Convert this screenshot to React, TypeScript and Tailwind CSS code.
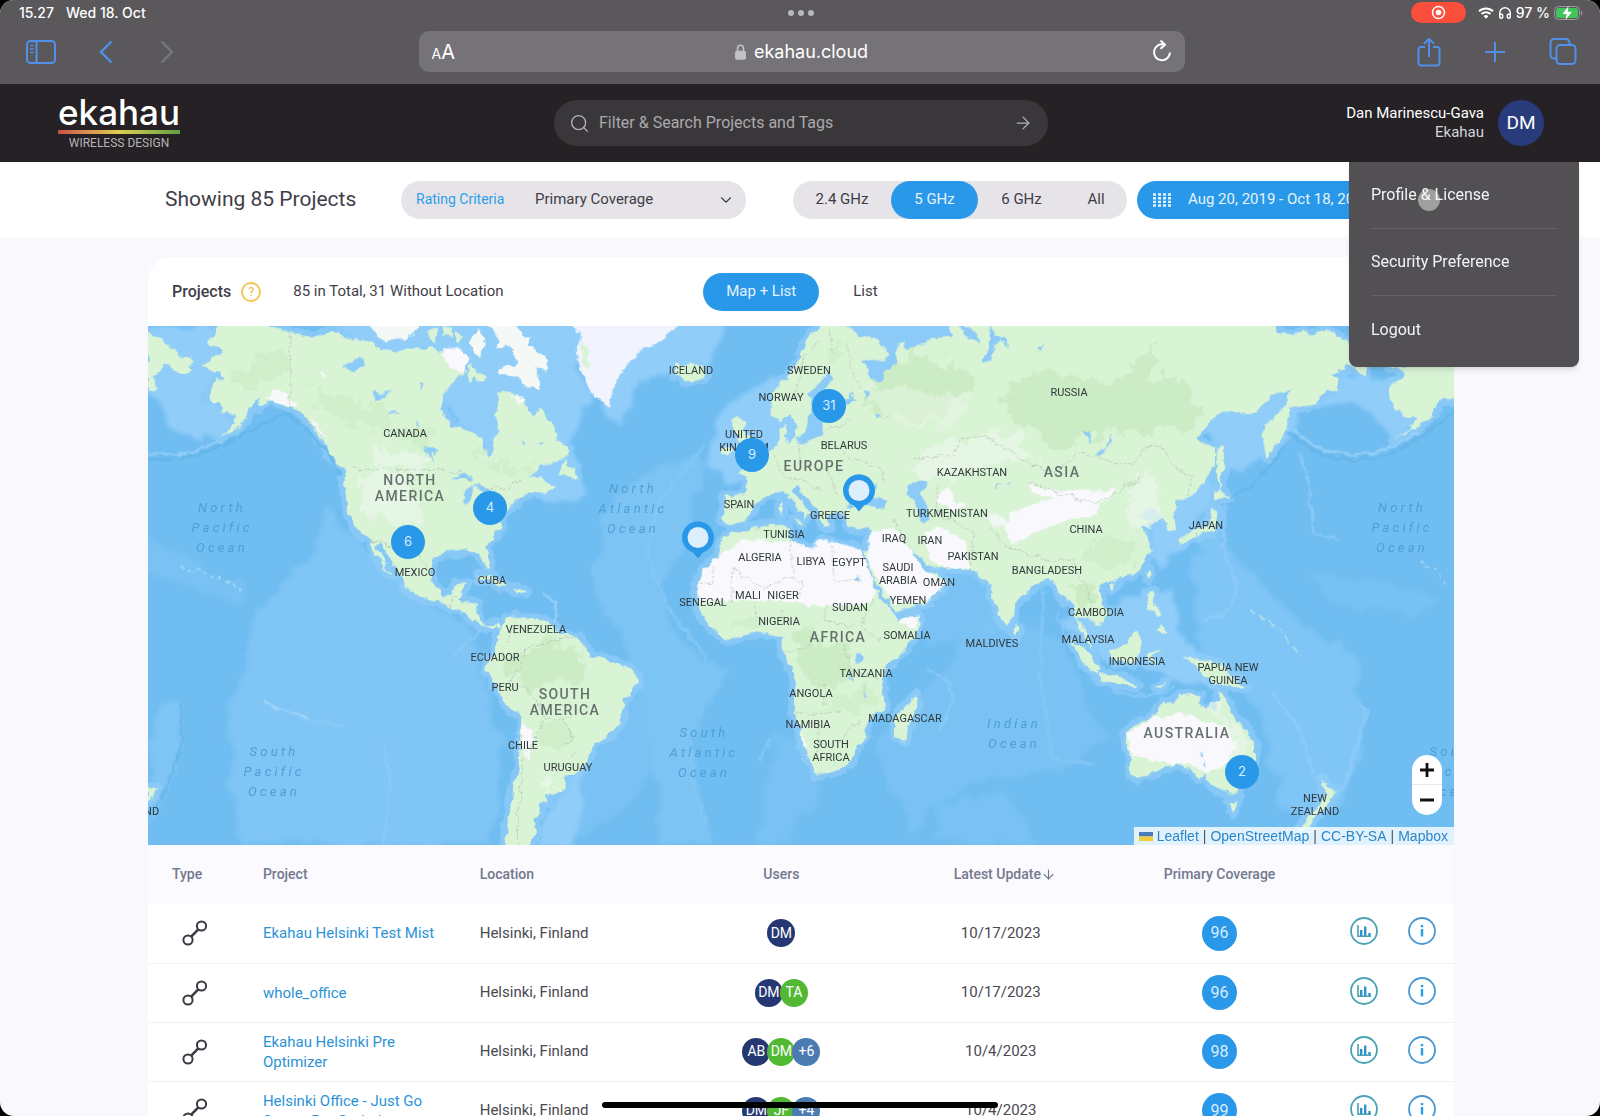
import { useState } from 'react';
import { ArrowDown, ArrowRight, ChevronDown, Headphones, Search } from 'lucide-react';

type Label = { text: string; x: number; y: number };

const COUNTRIES: Label[] = [
  { text: 'CANADA', x: 257, y: 107 },
  { text: 'ICELAND', x: 543, y: 44 },
  { text: 'SWEDEN', x: 661, y: 44 },
  { text: 'NORWAY', x: 633, y: 71 },
  { text: 'UNITED\nKINGDOM', x: 596, y: 115 },
  { text: 'BELARUS', x: 696, y: 119 },
  { text: 'RUSSIA', x: 921, y: 66 },
  { text: 'KAZAKHSTAN', x: 824, y: 146 },
  { text: 'SPAIN', x: 591, y: 178 },
  { text: 'GREECE', x: 682, y: 189 },
  { text: 'TURKMENISTAN', x: 799, y: 187 },
  { text: 'CHINA', x: 938, y: 203 },
  { text: 'JAPAN', x: 1058, y: 199 },
  { text: 'TUNISIA', x: 636, y: 208 },
  { text: 'IRAQ', x: 746, y: 212 },
  { text: 'IRAN', x: 782, y: 214 },
  { text: 'ALGERIA', x: 612, y: 231 },
  { text: 'LIBYA', x: 663, y: 235 },
  { text: 'EGYPT', x: 701, y: 236 },
  { text: 'PAKISTAN', x: 825, y: 230 },
  { text: 'SAUDI\nARABIA', x: 750, y: 248 },
  { text: 'OMAN', x: 791, y: 256 },
  { text: 'BANGLADESH', x: 899, y: 244 },
  { text: 'YEMEN', x: 760, y: 274 },
  { text: 'MEXICO', x: 267, y: 246 },
  { text: 'CUBA', x: 344, y: 254 },
  { text: 'SENEGAL', x: 555, y: 276 },
  { text: 'MALI', x: 600, y: 269 },
  { text: 'NIGER', x: 635, y: 269 },
  { text: 'SUDAN', x: 702, y: 281 },
  { text: 'CAMBODIA', x: 948, y: 286 },
  { text: 'NIGERIA', x: 631, y: 295 },
  { text: 'VENEZUELA', x: 388, y: 303 },
  { text: 'SOMALIA', x: 759, y: 309 },
  { text: 'MALDIVES', x: 844, y: 317 },
  { text: 'MALAYSIA', x: 940, y: 313 },
  { text: 'ECUADOR', x: 347, y: 331 },
  { text: 'INDONESIA', x: 989, y: 335 },
  { text: 'PERU', x: 357, y: 361 },
  { text: 'TANZANIA', x: 718, y: 347 },
  { text: 'ANGOLA', x: 663, y: 367 },
  { text: 'PAPUA NEW\nGUINEA', x: 1080, y: 348 },
  { text: 'NAMIBIA', x: 660, y: 398 },
  { text: 'MADAGASCAR', x: 757, y: 392 },
  { text: 'CHILE', x: 375, y: 419 },
  { text: 'SOUTH\nAFRICA', x: 683, y: 425 },
  { text: 'URUGUAY', x: 420, y: 441 },
  { text: 'NEW\nZEALAND', x: 1167, y: 479 },
  { text: 'NEW\nZEALAND', x: -13, y: 479 },
];

const CONTINENTS: Label[] = [
  { text: 'NORTH\nAMERICA', x: 262, y: 162 },
  { text: 'EUROPE', x: 666, y: 140 },
  { text: 'ASIA', x: 914, y: 146 },
  { text: 'AFRICA', x: 690, y: 311 },
  { text: 'SOUTH\nAMERICA', x: 417, y: 376 },
  { text: 'AUSTRALIA', x: 1039, y: 407 },
];

const OCEANS: Label[] = [
  { text: 'North\nPacific\nOcean', x: 74, y: 202 },
  { text: 'North\nAtlantic\nOcean', x: 485, y: 183 },
  { text: 'North\nPacific\nOcean', x: 1254, y: 202 },
  { text: 'South\nPacific\nOcean', x: 126, y: 446 },
  { text: 'South\nAtlantic\nOcean', x: 556, y: 427 },
  { text: 'South\nPacific\nOcean', x: 1306, y: 446 },
  { text: 'Indian\nOcean', x: 866, y: 408 },
];

const CLUSTERS = [
  { count: 31, x: 681, y: 80 },
  { count: 9, x: 604, y: 129 },
  { count: 4, x: 342, y: 182 },
  { count: 6, x: 260, y: 216 },
  { count: 2, x: 1094, y: 446 },
];

const PINS = [
  { name: 'Istanbul', x: 711, y: 164 },
  { name: 'Canary Islands', x: 550, y: 211 },
];

const ROWS = [
  { project: 'Ekahau Helsinki Test Mist', users: ['DM'], date: '10/17/2023', score: 96 },
  { project: 'whole_office', users: ['DM', 'TA'], date: '10/17/2023', score: 96 },
  { project: 'Ekahau Helsinki Pre Optimizer', users: ['AB', 'DM', '+6'], date: '10/4/2023', score: 98 },
  { project: 'Helsinki Office - Just Go Survey Pre Optimizer', users: ['DM', 'JF', '+4'], date: '10/4/2023', score: 99 },
];

const USER_COLORS = ['bg-[#263873]', 'bg-[#52b935]', 'bg-[#4b7bb0]'];
const BANDS = ['2.4 GHz', '5 GHz', '6 GHz', 'All'];

function Land() {
  return (
    <>
      {/* Americas */}
      <path d="M24 272L60 295L85 315L118 345L150 350L162 372L145 380L150 400L120 400L100 385L75 370L60 395L40 405L52 430L60 450L24 450Z" />
      <path d="M240 250L225 285L200 305L215 318L250 330L240 350L225 345L188 378L215 392L240 395L250 415L225 420L210 450L205 470L225 490L240 490L245 515L285 520L290 530L270 565L240 592L285 570L310 545L330 510L345 485L360 480L355 500L375 490L400 480L420 490L450 498L470 510L495 530L515 555L535 590L555 610L565 640L590 665L620 690L610 720L618 770L620 805L640 850L660 880L690 900L705 940L725 970L745 1000L760 1010L740 985L725 950L708 915L725 912L745 950L770 985L795 1020L800 1048L850 1075L895 1085L930 1100L960 1110L990 1135L1015 1155L1050 1165L1070 1158L1082 1170L1072 1145L1040 1158L1018 1142L1005 1120L1015 1090L975 1088L950 1080L970 1050L980 1028L950 1030L935 1060L905 1065L880 1035L870 1000L880 960L905 938L950 935L980 930L1015 935L1030 965L1045 985L1050 960L1035 925L1060 890L1085 860L1085 820L1110 800L1130 790L1150 765L1190 753L1215 762L1245 738L1215 728L1200 710L1165 710L1200 680L1250 665L1285 650L1285 625L1255 600L1240 570L1220 530L1200 500L1190 530L1165 515L1150 480L1110 455L1070 455L1075 500L1068 530L1080 570L1060 600L1062 640L1048 655L1030 630L1028 595L980 570L935 555L905 510L905 480L920 445L960 410L975 400L960 370L985 360L970 340L940 350L920 335L900 340L870 325L800 325L770 335L715 322L690 300L660 300L620 290L580 270L530 290L500 290L440 275L390 262L380 250Z" />
      <path d="M690 258L712 290L735 300L770 290L800 295L838 272L835 250L690 250ZM865 268L890 262L892 305L870 300ZM905 258L940 258L935 288L910 285ZM945 280L970 290L965 310L950 305Z" />
      <path d="M1040 250L1080 295L1075 325L1110 320L1135 360L1120 380L1080 385L1075 402L1130 410L1170 445L1200 452L1200 420L1188 385L1215 392L1228 358L1190 335L1165 320L1172 290L1150 285L1128 250Z" />
      <path d="M990 370L1010 390L1042 415L1030 425L1005 410L990 430L980 405ZM990 300L1015 265L1035 300L1020 350L995 330Z" />
      <path d="M1280 655L1262 690L1255 705L1290 710L1315 718L1305 685L1282 680Z" />
      <path d="M1015 1010L1050 1005L1100 1035L1080 1040L1050 1020L1015 1018ZM1118 1045L1150 1048L1162 1056L1130 1060Z" />
      <path d="M1080 1170L1100 1135L1130 1130L1150 1135L1215 1140L1235 1155L1270 1185L1310 1190L1340 1225L1345 1250L1375 1250L1430 1268L1460 1285L1492 1305L1490 1330L1455 1375L1445 1440L1420 1475L1360 1510L1340 1570L1300 1608L1270 1610L1278 1640L1260 1655L1225 1665L1222 1690L1195 1690L1200 1710L1180 1745L1188 1775L1165 1825L1095 1825L1100 1760L1115 1690L1120 1640L1135 1580L1140 1500L1145 1430L1100 1400L1080 1360L1055 1315L1035 1285L1045 1255L1065 1240L1075 1200Z" />
      {/* Europe and Africa */}
      <g transform="translate(1260 240)">
        <path d="M345 130L365 140L390 128L430 140L440 165L400 188L370 180L345 165Z" />
        <path d="M515 300L540 290L555 310L545 330L570 345L590 375L602 400L570 420L530 425L545 400L530 370L540 350L520 330ZM482 385L505 375L520 395L505 408L480 408Z" />
        <path d="M515 635L560 630L610 615L680 615L690 660L745 685L780 685L790 660L820 675L900 685L915 740L940 790L955 830L1000 880L1010 900L1080 890L1075 920L1050 970L980 1040L965 1080L975 1160L920 1200L920 1250L890 1275L880 1320L840 1350L770 1365L755 1330L725 1270L720 1220L700 1180L705 1070L690 1040L668 1000L668 950L640 945L600 935L500 960L440 910L415 870L410 790L430 750L475 710L485 660Z" />
        <path d="M1065 1125L1072 1160L1050 1210L1030 1262L1005 1250L1005 1190L1045 1150Z" />
        <path d="M660 545L668 548L668 582L660 580ZM700 598L730 600L725 612ZM1030 50L1065 35L1072 48L1040 66Z" />
        {/* Eurasia */}
        <path d="M780 18L740 60L720 110L700 150L660 190L635 220L628 265L640 295L665 300L690 280L700 300L710 345L690 370L675 350L680 312L660 325L658 375L630 390L600 415L560 445L535 455L565 480L560 525L490 530L495 560L485 600L515 615L550 605L575 570L590 545L635 520L670 515L700 550L735 590L725 602L748 580L725 545L695 510L710 495L735 530L770 565L790 620L810 620L800 590L830 575L860 590L865 620L900 630L925 620L930 640L925 680L910 700L920 720L940 780L975 830L1005 875L1050 865L1110 840L1160 790L1130 760L1095 755L1055 695L1070 700L1110 740L1155 745L1230 745L1260 765L1290 790L1300 840L1320 890L1340 920L1362 890L1365 850L1400 820L1440 785L1475 780L1490 800L1510 840L1530 835L1545 870L1555 910L1575 960L1598 988L1580 940L1552 895L1570 890L1590 900L1620 915L1650 880L1620 835L1615 800L1640 785L1690 775L1740 745L1775 690L1760 650L1745 620L1775 600L1735 590L1775 565L1790 575L1805 580L1825 640L1845 630L1840 590L1850 545L1890 530L1930 490L1965 430L1965 380L1935 375L1910 355L1960 290L1990 275L2090 280L2130 230L2190 210L2185 250L2140 300L2112 320L2110 370L2120 415L2150 370L2185 320L2185 265L2255 255L2300 210L2338 210L2330 170L2315 160L2360 150L2360 130L2400 160L2415 170L2420 140L2360 65L2320 40L2285 30L2260 50L2235 35L2200 45L2150 35L2145 10L780 10Z" />
      </g>
      {/* East Asia and Oceania */}
      <g transform="translate(2460 240)">
        <path d="M770 380L785 380L795 450L780 480L778 510L770 460ZM765 520L780 505L805 530L765 545ZM762 560L775 580L762 630L700 650L660 675L655 655L700 635L742 620L752 590Z" />
        <path d="M570 748L575 760L565 778L560 765ZM448 795L465 790L455 812ZM560 820L580 815L580 860L608 880L600 890L565 868ZM590 930L610 910L620 940L605 945ZM160 912L178 925L172 945L162 938Z" />
        <path d="M330 955L380 990L420 1050L412 1068L370 1030ZM418 1062L490 1072L532 1095L530 1102L420 1078ZM445 990L480 985L525 935L545 950L540 1000L520 1030L460 1025ZM560 1000L605 992L580 1010L590 1040L565 1030ZM590 1100L620 1085L600 1105Z" />
        <path d="M670 1010L700 1015L740 1020L790 1040L830 1080L858 1105L820 1100L760 1090L720 1050Z" />
        <path d="M495 1240L530 1210L580 1190L610 1145L640 1150L660 1125L720 1125L710 1150L765 1180L780 1115L805 1150L820 1190L860 1230L885 1280L885 1320L850 1370L830 1420L770 1410L740 1380L735 1360L715 1375L690 1345L650 1330L600 1350L530 1375L510 1365L510 1310Z" />
        <path d="M805 1448L832 1448L820 1482ZM1085 1375L1105 1405L1130 1410L1108 1445L1060 1495L1045 1530L1015 1530L1070 1465L1095 1435Z" />
        <path d="M1285 140L1330 150L1325 180L1295 190L1285 230L1310 270L1340 290L1370 290L1350 330L1300 362L1370 325L1400 300L1430 260L1445 235L1490 240L1490 130Z" />
      </g>
      <path d="M24 1645L48 1645L40 1665L24 1685Z" />
    </>
  );
}

function WorldMap() {
  return (
    <svg
      viewBox="24 258 3918 1557"
      preserveAspectRatio="xMidYMid slice"
      className="absolute inset-0 h-full w-full"
      role="img"
      aria-label="World map"
    >
      <defs>
        <filter id="coast" x="-2%" y="-2%" width="104%" height="104%">
          <feTurbulence type="fractalNoise" baseFrequency="0.035" numOctaves="3" seed="4" result="n" />
          <feDisplacementMap in="SourceGraphic" in2="n" scale="24" xChannelSelector="R" yChannelSelector="G" />
        </filter>
        <filter id="relief" x="-2%" y="-2%" width="104%" height="104%">
          <feTurbulence type="fractalNoise" baseFrequency="0.02" numOctaves="4" seed="7" result="n" />
          <feDisplacementMap in="SourceGraphic" in2="n" scale="90" xChannelSelector="R" yChannelSelector="G" />
          <feGaussianBlur stdDeviation="2" />
        </filter>
        <filter id="soft" x="-10%" y="-10%" width="120%" height="120%">
          <feTurbulence type="fractalNoise" baseFrequency="0.012" numOctaves="3" seed="9" result="n" />
          <feDisplacementMap in="SourceGraphic" in2="n" scale="70" xChannelSelector="R" yChannelSelector="G" />
          <feGaussianBlur stdDeviation="7" />
        </filter>
      </defs>

      <rect x="24" y="258" width="3918" height="1557" fill="#70bdf1" />

      {/* sea floor */}
      <g filter="url(#soft)" fill="#7fc5f5">
        <path d="M560 800L700 950L1000 1180L1030 1330L1090 1480L1060 1815L300 1815L260 1500L350 1100L520 960Z" />
        <path d="M24 900L120 950L300 1030L330 1090L200 1060L24 1000Z" opacity=".6" />
        <path d="M1400 820L1500 700L1700 640L1640 900L1560 1060L1640 1220L1760 1300L1660 1500L1700 1815L1560 1815L1540 1500L1440 1200L1360 1000Z" opacity=".8" />
        <path d="M1500 1320L1600 1500L1500 1650L1300 1815L1240 1815L1300 1600Z" opacity=".7" />
        <path d="M1900 1500L2020 1460L2050 1640L1960 1815L1860 1815Z" opacity=".6" />
        <path d="M2200 1500L2400 1300L2560 1100L2760 1200L2900 1500L2760 1600L2500 1620L2300 1780Z" opacity=".7" />
        <path d="M3150 960L3280 940L3480 1150L3640 1240L3680 1450L3600 1700L3420 1700L3360 1420L3180 1260Z" />
        <path d="M3180 700L3240 860L3300 1000L3240 1090L3180 900Z" />
        <path d="M3500 1000L3700 1010L3900 1080L3800 1130L3560 1080Z" opacity=".5" />
        <path d="M2180 1030L2420 950L2600 1000L2560 1180L2380 1220Z" opacity=".7" />
        <path d="M2400 1700L2600 1640L2700 1815L2380 1815Z" opacity=".6" />
        <path d="M60 1380L130 1400L110 1600L24 1760L24 1500Z" />
      </g>

      {/* continental shelves */}
      <g filter="url(#soft)" fill="#91cdf9">
        <path d="M24 258H250L200 480L300 560L170 610L90 540L24 470Z" />
        <path d="M560 240L1300 240L1340 480L1280 620L1340 760L1240 800L1100 700L860 420Z" />
        <path d="M1280 240H1760L1700 380L1500 420L1440 560L1380 500Z" />
        <path d="M1900 400L1740 520L1700 640L1760 720L1860 720L2080 600Z" />
        <path d="M2040 240H2580V420L2200 420Z" />
        <path d="M3180 540L3260 700L3420 640L3480 500L3380 440Z" />
        <path d="M3520 500L3600 400L3780 420L3860 520L3760 600L3640 480Z" />
        <path d="M3000 800L3060 1000L3140 900L3220 760L3120 700Z" />
        <path d="M2760 1140L2900 1260L3060 1300L3240 1350L3120 1180L3100 1060L2940 1080Z" />
        <path d="M1260 1660L1340 1560L1300 1815L1180 1815Z" />
      </g>
      <g filter="url(#coast)" stroke="#91cdf9" strokeWidth="34" strokeLinejoin="round" fill="#91cdf9" opacity=".75">
        <Land />
      </g>

      {/* trenches, ridges and island arcs */}
      <g filter="url(#coast)" fill="none" strokeLinecap="round" opacity=".8">
        <path d="M24 655Q140 670 250 615T430 520Q520 560 600 700" stroke="#63b4e8" strokeWidth="8" />
        <path d="M24 640Q140 655 240 605" stroke="#9bd3fa" strokeWidth="7" />
        <path d="M3450 580Q3540 660 3640 660T3830 600L3942 520" stroke="#63b4e8" strokeWidth="8" />
        <path d="M3460 570Q3540 645 3640 643T3830 580" stroke="#9bd3fa" strokeWidth="8" />
        <path d="M3430 620Q3360 740 3270 770" stroke="#63b4e8" strokeWidth="8" />
        <path d="M3255 800L3250 920L3290 1040L3270 1110L3200 1140" stroke="#8ecbf8" strokeWidth="12" />
        <path d="M3480 640L3510 760L3520 880L3600 900" stroke="#8ecbf8" strokeWidth="7" />
        <path d="M2750 1120Q2780 1240 2880 1320T3100 1345" stroke="#8ecbf8" strokeWidth="8" />
        <path d="M3660 1390L3680 1420L3620 1620L3560 1700" stroke="#8ecbf8" strokeWidth="14" />
        <path d="M3400 1360L3480 1470L3520 1600" stroke="#8ecbf8" strokeWidth="12" />
        <path d="M2710 1030L2700 1320L2740 1560L2860 1570" stroke="#84c8f6" strokeWidth="10" />
        <path d="M1690 620L1560 780L1520 940L1580 1100L1700 1260" stroke="#84c8f6" strokeWidth="12" />
        <path d="M1650 1500L1660 1640L1700 1760M1860 1560L1890 1500" stroke="#84c8f6" strokeWidth="10" />
        <path d="M2360 1290Q2430 1310 2440 1380L2400 1470" stroke="#8ecbf8" strokeWidth="9" />
        <path d="M730 1500L750 1620L730 1815M480 1430L620 1460M940 1250L1050 1140" stroke="#8bcaf7" strokeWidth="10" />
        <path d="M120 1390Q140 1500 90 1620L40 1720" stroke="#63b4e8" strokeWidth="6" />
        <path d="M1210 1060L1250 1090L1240 1140" stroke="#a3d7fb" strokeWidth="8" />
        <path d="M120 980L200 1000L260 1025L305 1048M3840 970L3890 990L3922 1045" stroke="#b9e1f8" strokeWidth="5" strokeDasharray="8 16" />
        <path d="M370 1385L420 1410L500 1430" stroke="#a8d9fa" strokeWidth="6" />
        <path d="M3330 1110L3420 1170L3480 1250" stroke="#bfe5ee" strokeWidth="5" strokeDasharray="20 14" />
      </g>

      <g filter="url(#coast)">
        <g fill="#d9f3d5">
          <Land />
        </g>
        {/* forests */}
        <g fill="#ccecc5" filter="url(#relief)">
          <path d="M290 400L340 340L440 330L445 400L380 430L300 440Z" opacity=".8" />
          <path d="M480 400L560 480L700 490L760 560L900 570L860 620L680 560L560 520Z" opacity=".7" />
          <path d="M980 590L1040 670L1150 660L1170 680L1130 700L1080 700L1000 640Z" opacity=".7" />
          <path d="M1150 1225L1240 1195L1310 1225L1325 1262L1340 1310L1280 1320L1160 1345L1110 1310L1080 1265Z" />
          <path d="M1190 1470L1230 1440L1270 1440L1300 1500L1260 1540L1200 1520Z" opacity=".8" />
          <g transform="translate(1260 240)">
            <path d="M940 190L1000 130L1080 100L1180 130L1240 180L1220 220L1170 240L1150 290L1060 300L980 290L910 240Z" />
            <path d="M1380 170L1460 150L1600 190L1720 170L1760 90L1795 55L1770 170L1900 190L1925 300L1890 330L1760 330L1630 340L1500 380L1380 330L1330 240Z" />
            <path d="M1560 680L1630 640L1740 690L1700 730L1640 750L1560 730Z" opacity=".8" />
            <path d="M700 930L740 920L760 970L860 970L880 1070L830 1100L740 1080L705 1010Z" />
            <path d="M520 890L560 890L640 910L520 930ZM800 1110L900 1120L940 1100L940 1150L880 1180L800 1150Z" opacity=".7" />
            <path d="M1540 800L1600 790L1600 840L1560 850Z" />
            <path d="M820 60L850 50L840 110L810 110Z" opacity=".7" />
          </g>
        </g>
        {/* steppe */}
        <g fill="#e8f6e8" filter="url(#relief)">
          <path d="M710 620L840 630L900 680L720 685ZM660 700L800 700L850 860L700 830L660 780Z" opacity=".8" />
          <path d="M1215 1600L1250 1612L1258 1640L1220 1655L1200 1630Z" />
          <path d="M2300 660L2440 600L2620 580L2700 650L2560 680L2360 720Z" opacity=".8" />
          <path d="M2960 820L3010 680L3050 720L3060 830L3000 880Z" opacity=".8" />
          <path d="M3200 1400L3230 1380L3310 1500L3310 1600L3260 1620L3240 1440Z" opacity=".7" />
          <path d="M2150 450L2300 440L2500 480L2440 560L2300 560Z" opacity=".5" />
        </g>
        {/* deserts and ice */}
        <g fill="#f8f8fd">
          <path d="M400 445L430 455L470 500L440 495L380 478ZM540 390L560 405L562 420L545 408ZM500 515L560 600L540 590Z" opacity=".9" />
          <path d="M905 330L960 320L985 360L970 400L930 385ZM1110 460L1150 480L1140 500Z" />
          <path d="M690 250L835 250L838 272L800 295L735 300L712 290ZM1040 250L1080 295L1075 325L1110 320L1135 360L1120 380L1080 385L1075 402L1130 410L1170 445L1200 452L1200 420L1188 385L1215 392L1228 358L1190 335L1165 320L1172 290L1150 285L1128 250ZM990 300L1015 265L1035 300L1020 350L995 330Z" opacity=".85" />
          <path d="M1145 1440L1180 1480L1165 1560L1145 1540Z" />
          <g transform="translate(1260 240)">
            <path d="M30 10L60 45L50 100L65 160L90 215L150 262L165 195L185 145L215 125L245 90L290 70L345 30L370 10Z" fill="#f1f4fd" />
            <path d="M475 710L540 665L690 660L745 685L790 660L900 685L940 790L945 840L900 855L780 860L650 842L520 840L415 845L410 790L430 750Z" />
            <path d="M930 640L1000 622L1050 690L1100 755L1160 790L1110 840L1050 850L1005 850L960 790L915 710Z" />
            <path d="M1090 640L1130 620L1210 660L1230 745L1155 745L1110 720Z" />
            <path d="M1330 625L1350 590L1410 555L1500 530L1620 540L1610 585L1540 600L1440 630L1360 675Z" />
            <path d="M1410 495L1500 515L1670 505L1630 550L1510 540L1420 520ZM1130 520L1170 500L1180 540L1220 560L1180 570L1130 545Z" />
            <path d="M1010 898L1080 890L1060 925ZM725 1230L745 1290L728 1270Z" />
            <path d="M1280 590L1320 580L1350 620L1300 620Z" opacity=".7" />
          </g>
          <path d="M2960 1480L3040 1435L3130 1420L3180 1440L3260 1460L3290 1520L3250 1580L3200 1600L3150 1570L3080 1570L2980 1550Z" />
        </g>
        <path d="M1320 310L1345 320L1345 390L1330 380Z" fill="#d9f3d5" />

        {/* inland water */}
        <g fill="#8ccaf7">
          <path d="M605 380L660 350L680 370L640 395ZM695 455L725 460L760 445L720 475L700 485ZM745 520L785 515L750 528ZM845 620L865 640L880 670L870 630L885 650L890 625ZM832 432L845 430L840 448ZM828 545L836 540L832 562Z" />
          <path d="M930 720L970 695L1005 720L975 715ZM975 750L1000 735L990 790L975 795ZM1000 735L1045 740L1060 760L1030 760Z" />
          <path d="M1150 600L1160 620L1150 615ZM1195 605L1210 600L1205 612Z" />
          <g transform="translate(1260 240)">
            <path d="M850 10L890 45L950 60L982 95L975 125L905 115L935 180L965 185L970 160L1010 130L1015 70L1035 60L1035 95L1080 75L1120 55L1180 50L1165 10Z" />
            <path d="M1190 10L1250 40L1255 72L1225 55ZM1288 10L1305 50L1335 50L1345 85L1325 60L1310 70L1295 115L1270 125L1260 118L1290 90Z" />
            <path d="M745 225L775 190L805 158L822 175L797 205L812 238L880 234L870 250L805 265L787 310L790 345L760 352L735 368L705 358L735 330L748 295L757 260Z" />
            <path d="M870 520L925 525L985 545L975 565L915 555L860 565ZM940 495L955 490L945 515Z" />
            <path d="M1045 500L1100 480L1100 505L1080 520L1105 560L1108 600L1080 605L1070 560L1042 522Z" />
            <path d="M875 210L890 240L870 240ZM915 205L930 215L920 245ZM945 280L960 290L950 295ZM1435 80L1450 70L1440 95Z" />
            <path d="M1655 340L1655 370L1612 412L1600 405L1640 380ZM1300 505L1355 485L1350 490L1310 497ZM1570 330L1595 335L1590 375Z" />
            <path d="M888 1005L905 998L915 1010L900 1028L888 1020ZM868 1050L880 1080L872 1085ZM912 1095L920 1130L914 1140ZM880 780L905 765L890 782Z" />
          </g>
          <path d="M3180 1530L3192 1545L3184 1550ZM3188 1560L3196 1580L3188 1578Z" />
        </g>

        {/* borders */}
        <g fill="none" stroke="#9fb0a0" strokeWidth="3" strokeDasharray="9 5" opacity=".6">
          <path d="M450 258V498L515 550L550 600M640 688H905L975 710L1040 745L1100 745L1150 715M690 900L755 918L810 920L860 980" />
          <path d="M930 1100L940 1070L970 1090M1090 1220L1120 1160M1150 1225L1250 1200L1330 1190M1150 1225V1280L1110 1320L1160 1350L1200 1400L1210 1440L1190 1480L1150 1560L1130 1815M1210 1440H1270L1300 1500L1260 1520M1310 1530L1280 1560" />
          <g transform="translate(1260 240)">
            <path d="M780 60L730 110L720 170L700 240M800 30L820 100M860 60L870 140L900 200M800 330L880 300M720 370V430L800 450L830 520M830 380L880 420L960 440L970 480M640 410L670 470L720 480L780 510M1060 420L1180 400L1200 360L1260 345L1330 380L1400 430" />
            <path d="M515 740L610 810L690 770L730 790M515 740V850M690 660L700 760M820 675V780H905M460 740V790H415M730 790L710 850M580 850L600 900M660 870L700 920M800 860L790 900L880 920M940 840L900 920L960 960M670 1000L740 980L760 920M705 1180H790L840 1170M795 1090V1160M775 1210V1300M830 1270L900 1200M850 970L870 1040L960 1080M560 560L490 570M1000 600L1050 690M1160 590L1240 640L1230 745M1130 500V580L1180 600" />
            <path d="M1400 430L1480 460L1560 400L1640 420L1720 440L1760 380L1810 380L1840 440L1900 470L1880 530M1410 490L1500 520L1610 550L1740 480M1290 620L1340 680L1460 720L1540 720L1560 780M1570 780L1600 860M1740 470L1680 510" />
          </g>
        </g>
      </g>
    </svg>
  );
}

function ProjectMap() {
  return (
    <div className="relative h-[519px] overflow-hidden">
      <WorldMap />
      {OCEANS.map((l, i) => (
        <span
          key={i}
          className="absolute -translate-x-1/2 -translate-y-1/2 whitespace-pre text-center text-[13px] leading-5 tracking-[0.25em] text-[#4d9fd6] italic"
          style={{ left: l.x, top: l.y }}
        >
          {l.text}
        </span>
      ))}
      {COUNTRIES.map((l, i) => (
        <span
          key={i}
          className="absolute -translate-x-1/2 -translate-y-1/2 whitespace-pre text-center text-[11px] leading-[13px] text-[#30383b]"
          style={{ left: l.x, top: l.y }}
        >
          {l.text}
        </span>
      ))}
      {CONTINENTS.map((l) => (
        <span
          key={l.text}
          className="absolute -translate-x-1/2 -translate-y-1/2 whitespace-pre text-center text-[14px] leading-4 font-medium tracking-widest text-[#66706c]"
          style={{ left: l.x, top: l.y }}
        >
          {l.text}
        </span>
      ))}
      {PINS.map((p) => (
        <button
          key={p.name}
          aria-label={p.name}
          className="absolute -translate-x-1/2"
          style={{ left: p.x, top: p.y - 16 }}
        >
          <svg width="34" height="38" viewBox="0 0 34 38">
            <path d="M17 37.5l-5-6A16 16 0 1 1 22 31.500z" fill="#2a98e9" />
            <circle cx="17" cy="16.500" r="10.500" fill="#ddeefc" />
          </svg>
        </button>
      ))}
      {CLUSTERS.map((c) => (
        <button
          key={c.count}
          className="absolute size-[34px] -translate-x-1/2 -translate-y-1/2 rounded-full bg-[#2a98e9] font-[Inter,sans-serif] text-[13px] text-[#d9eefd]"
          style={{ left: c.x, top: c.y }}
        >
          {c.count}
        </button>
      ))}
      <div className="absolute right-3 bottom-[30px] flex w-[30px] flex-col divide-y divide-gray-200 overflow-hidden rounded-full bg-white">
        <button aria-label="Zoom in" className="flex h-[30px] items-center justify-center">
          <svg width="14" height="14" viewBox="0 0 14 14" stroke="#111" strokeWidth="2.800">
            <path d="M0 7h14M7 0v14" />
          </svg>
        </button>
        <button aria-label="Zoom out" className="flex h-[30px] items-center justify-center">
          <svg width="14" height="14" viewBox="0 0 14 14" stroke="#111" strokeWidth="2.800">
            <path d="M0 7h14" />
          </svg>
        </button>
      </div>
      <div className="absolute right-0 bottom-0 flex h-[18px] items-center gap-1 bg-white/80 pr-[6px] pl-[5px] font-['Liberation_Sans',sans-serif] text-[14px] text-[#2a86c8]">
        <svg width="14" height="9" viewBox="0 0 14 9" aria-hidden="true">
          <path fill="#4a7bbd" d="M0 0h14v4.500H0z" />
          <path fill="#f2cf3a" d="M0 4.500h14V9H0z" />
        </svg>
        <a href="#leaflet">Leaflet</a>
        <span className="text-gray-600">|</span>
        <a href="#osm">OpenStreetMap</a>
        <span className="text-gray-600">|</span>
        <a href="#license">CC-BY-SA</a>
        <span className="text-gray-600">|</span>
        <a href="#mapbox">Mapbox</a>
      </div>
    </div>
  );
}

function BrowserChrome() {
  return (
    <div className="h-[84px] shrink-0 bg-[#5a585b] font-[Inter,sans-serif] text-white">
      <div className="grid h-[25px] grid-cols-[1fr_auto_1fr] items-center pr-[17px] pl-[19px] text-[14px] font-medium">
        <div className="flex gap-3">
          <span>15.27</span>
          <span>Wed 18. Oct</span>
        </div>
        <div className="flex gap-1">
          <i className="size-[6px] rounded-full bg-[#b9b8ba]" />
          <i className="size-[6px] rounded-full bg-[#b9b8ba]" />
          <i className="size-[6px] rounded-full bg-[#b9b8ba]" />
        </div>
        <div className="flex items-center justify-end gap-1">
          <span className="mr-2 flex h-[21px] w-[55px] items-center justify-center rounded-full bg-[#fb4f3c]">
            <svg width="15" height="15" viewBox="0 0 15 15" fill="none" stroke="#fff" strokeWidth="1.500">
              <circle cx="7.500" cy="7.500" r="6" />
              <circle cx="7.500" cy="7.500" r="2.800" fill="#fff" stroke="none" />
            </svg>
          </span>
          <svg width="16" height="12" viewBox="0 0 16 12" fill="none" stroke="#fff" strokeWidth="2">
            <path d="M1 4.300a10 10 0 0 1 14 0M3.500 7a6.400 6.400 0 0 1 9 0" />
            <path d="M8 11.800L5.600 9.300a3.400 3.400 0 0 1 4.800 0z" fill="#fff" stroke="none" />
          </svg>
          <Headphones size={14} strokeWidth={2.5} />
          <span>97 %</span>
          <svg width="29" height="14" viewBox="0 0 29 14" aria-label="Charging">
            <rect x=".5" y=".5" width="25" height="13" rx="4" fill="none" stroke="#9b9a9c" />
            <rect x="2" y="2" width="22" height="10" rx="2.500" fill="#41c45c" />
            <path d="M27 4.800q1.500.8 1.500 2.200T27 9.200z" fill="#9b9a9c" />
            <path d="M14.500 0L8.500 8h4l-1 6 6.500-8.300h-4.200z" fill="#fff" />
          </svg>
        </div>
      </div>

      <div className="grid h-[53px] grid-cols-[1fr_766px_1fr] items-center pr-[23px] pl-[26px] text-[#5090ea]">
        <div className="flex items-center">
          <button aria-label="Show sidebar">
            <svg width="30" height="24" viewBox="0 0 30 24" fill="none" stroke="currentColor" strokeWidth="2">
              <rect x="1" y="1" width="28" height="22" rx="3.500" />
              <path d="M10.500 1v22" />
              <path d="M4 5.500h3.500M4 9h3.500M4 12.500h3.500" strokeWidth="1.500" />
            </svg>
          </button>
          <button aria-label="Back" className="ml-[43px]">
            <svg width="14" height="24" viewBox="0 0 14 24" fill="none" stroke="currentColor" strokeWidth="2.400">
              <path d="M12.500 1.500L2 12l10.500 10.500" />
            </svg>
          </button>
          <button aria-label="Forward" className="ml-[47px] text-[#7b797c]">
            <svg width="14" height="24" viewBox="0 0 14 24" fill="none" stroke="currentColor" strokeWidth="2.200">
              <path d="M1.500 1.500L12 12L1.500 22.500" />
            </svg>
          </button>
        </div>
        <div className="grid h-[41px] grid-cols-[1fr_auto_1fr] items-center rounded-[10px] bg-[#757377] px-[13px] text-white">
          <button className="justify-self-start" aria-label="Page settings">
            <span className="text-[14px]">A</span>
            <span className="text-[20px]">A</span>
          </button>
          <div className="flex items-center gap-2">
            <svg width="11" height="16" viewBox="0 0 11 16" aria-hidden="true">
              <path d="M2.500 7V4.200a3 3 0 0 1 6 0V7" fill="none" stroke="#c2c1c3" strokeWidth="1.600" />
              <rect y="6.800" width="11" height="9" rx="2" fill="#c2c1c3" />
            </svg>
            <span className="text-[18px]">ekahau.cloud</span>
          </div>
          <button className="justify-self-end" aria-label="Reload">
            <svg width="20" height="23" viewBox="0 0 20 23" fill="none" stroke="#fff" strokeWidth="2">
              <path d="M12 4.500A8 8 0 1 0 18 12.500" />
              <path d="M8.500.5l4.500 4.200-4.500 4" />
            </svg>
          </button>
        </div>
        <div className="flex items-center justify-end">
          <button aria-label="Share">
            <svg width="24" height="30" viewBox="0 0 24 30" fill="none" stroke="currentColor" strokeWidth="2">
              <path d="M8 10H4a2.500 2.500 0 0 0-2.500 2.500V26A2.500 2.500 0 0 0 4 28.500h16a2.500 2.500 0 0 0 2.500-2.500V12.500A2.500 2.500 0 0 0 20 10h-4" />
              <path d="M12 20V2M7 6.800L12 1.800l5 5" />
            </svg>
          </button>
          <button aria-label="New tab" className="ml-[44px]">
            <svg width="20" height="20" viewBox="0 0 20 20" stroke="currentColor" strokeWidth="2">
              <path d="M0 10h20M10 0v20" />
            </svg>
          </button>
          <button aria-label="Show tabs" className="ml-[44px]">
            <svg width="28" height="27" viewBox="0 0 28 27" fill="none" stroke="currentColor" strokeWidth="2">
              <rect x="7.500" y="7" width="19" height="19" rx="3.500" />
              <path d="M7.500 20.500H5A3.500 3.500 0 0 1 1.500 17V4.500A3.500 3.500 0 0 1 5 1h12a3.500 3.500 0 0 1 3.500 3.500V7" />
            </svg>
          </button>
        </div>
      </div>
    </div>
  );
}

function Header() {
  return (
    <header className="relative z-10 grid h-[78px] shrink-0 grid-cols-[1fr_494px_1fr] items-center bg-[#252124] pr-14 pl-[58px]">
      <a href="#home" className="flex w-[122px] flex-col items-center pb-[2px] text-white">
        <span className="font-[Inter,sans-serif] text-[35px] leading-[35px] font-medium">ekahau</span>
        <span className="h-1 w-full bg-linear-to-r from-[#c9504a] via-[#ddcf50] to-[#5f9e46]" />
        <span className="mt-[3px] text-[12px] leading-3 text-[#b5b3b6]">WIRELESS DESIGN</span>
      </a>
      <form className="flex h-[46px] items-center rounded-full bg-[#3a373a] px-[15px] text-[#b3b1b4]">
        <Search size={21} strokeWidth={1.5} />
        <input
          type="search"
          aria-label="Filter and search"
          placeholder="Filter & Search Projects and Tags"
          className="ml-[9px] min-w-0 flex-1 bg-transparent text-[16px] outline-none placeholder:text-[#aba9ac]"
        />
        <button aria-label="Submit search">
          <ArrowRight size={20} strokeWidth={1.5} />
        </button>
      </form>
      <div className="flex items-center justify-end gap-[14px]">
        <div className="text-right text-[15px] leading-[19px] text-white">
          <div>Dan Marinescu-Gava</div>
          <div className="text-gray-300">Ekahau</div>
        </div>
        <button className="size-[46px] rounded-full bg-[#283c7c] text-[19px] text-white">DM</button>
      </div>

      <nav className="absolute top-full right-[21px] w-[230px] rounded-b-lg bg-[#525053] px-[22px] pb-1 text-[16px] text-gray-100 shadow-md">
        <div className="divide-y divide-[#646266]">
          <a href="#profile" className="flex h-[67px] items-center">Profile &amp; License</a>
          <a href="#security" className="flex h-[67px] items-center">Security Preference</a>
          <a href="#logout" className="flex h-[67px] items-center">Logout</a>
        </div>
        <span className="absolute top-[27px] left-[69px] size-[22px] rounded-full bg-white/45" />
      </nav>
    </header>
  );
}

function Toolbar() {
  const [band, setBand] = useState('5 GHz');
  return (
    <div className="flex h-[75px] shrink-0 items-center bg-white pl-[165px] text-[15px] text-[#3f3e48]">
      <h1 className="w-[236px] text-[21px]">Showing 85 Projects</h1>
      <div className="relative flex h-[38px] w-[345px] items-center rounded-full bg-[#e6e4e9] pl-[15px]">
        <label htmlFor="criteria" className="w-[115px] text-[14px] text-[#2ba0ea]">Rating Criteria</label>
        <select id="criteria" className="h-full flex-1 appearance-none bg-transparent px-1 outline-none">
          <option>Primary Coverage</option>
        </select>
        <ChevronDown size={18} strokeWidth={1.5} className="pointer-events-none absolute right-[11px]" />
      </div>
      <div className="ml-[47px] flex h-[38px] rounded-full bg-[#e6e4e9]">
        {BANDS.map((b) => (
          <button
            key={b}
            aria-pressed={b === band}
            onClick={() => setBand(b)}
            className={b === band ? 'w-[87px] rounded-full bg-[#2a98e9] text-[#e4f3fe]' : b === 'All' ? 'w-[62px]' : b === '6 GHz' ? 'w-[87px]' : 'w-[98px]'}
          >
            {b}
          </button>
        ))}
      </div>
      <button className="ml-[10px] flex h-[38px] items-center gap-[17px] whitespace-nowrap rounded-full bg-[#2a98e9] px-4 text-[#e4f3fe]">
        <svg width="18" height="14" viewBox="0 0 18 14" stroke="currentColor" strokeWidth="3" strokeDasharray="3 2" aria-hidden="true">
          <path d="M0 1.500h18M0 5.200h18M0 8.900h18M0 12.500h18" strokeWidth="2.400" />
        </svg>
        Aug 20, 2019 - Oct 18, 2023
      </button>
    </div>
  );
}

function ProjectTable() {
  return (
    <table className="w-full table-fixed bg-white text-[15px] text-[#4a4952]">
      <colgroup>
        <col className="w-[8.800%]" />
        <col className="w-[16.600%]" />
        <col className="w-[16.600%]" />
        <col className="w-[13%]" />
        <col className="w-[20.600%]" />
        <col className="w-[12.900%]" />
        <col />
      </colgroup>
      <thead className="bg-[#fafaff] text-[14px] text-[#74798c]">
        <tr className="h-[59px] text-left">
          <th className="pl-6 font-medium">Type</th>
          <th className="font-medium">Project</th>
          <th className="font-medium">Location</th>
          <th className="text-center font-medium">Users</th>
          <th className="pl-2 font-medium">
            <button className="mx-auto flex items-center">
              Latest Update
              <ArrowDown size={15} strokeWidth={1.8} />
            </button>
          </th>
          <th className="text-center font-medium">Primary Coverage</th>
          <th>
            <span className="sr-only">Actions</span>
          </th>
        </tr>
      </thead>
      <tbody>
        {ROWS.map((r) => (
          <tr key={r.project} className="h-[59px] border-b border-[#f1f1f5]">
            <td className="pl-[34px]">
              <svg width="26" height="26" viewBox="0 0 26 26" fill="none" stroke="#3c3b45" strokeWidth="2" aria-hidden="true">
                <circle cx="6" cy="20" r="4.600" />
                <circle cx="19.500" cy="6" r="4.600" />
                <path d="M9.200 16.700L16.300 9.300" strokeWidth="2.600" />
              </svg>
            </td>
            <td className="pr-8">
              <a href="#project" className="line-clamp-2 leading-5 text-[#2b93d6]">{r.project}</a>
            </td>
            <td>Helsinki, Finland</td>
            <td>
              <div className="flex justify-center -space-x-[3px]">
                {r.users.map((u, i) => (
                  <span
                    key={u}
                    className={`flex size-7 items-center justify-center rounded-full text-[14px] text-white ${USER_COLORS[i]}`}
                  >
                    {u}
                  </span>
                ))}
              </div>
            </td>
            <td className="text-center">{r.date}</td>
            <td>
              <span className="mx-auto flex size-[35px] items-center justify-center rounded-full bg-[#2a98e9] text-[16px] text-[#d9eefd]">
                {r.score}
              </span>
            </td>
            <td>
              <div className="flex justify-end gap-[30px] pr-[18px] pb-1">
                <button aria-label="Report">
                  <svg width="28" height="28" viewBox="0 0 28 28" fill="none" stroke="#4aa3b5" strokeWidth="1.800">
                    <circle cx="14" cy="14" r="13" />
                    <path d="M8 8v11.200H21" strokeWidth="1.600" />
                    <path d="M11.200 19v-6M15.200 19V9.500M19.500 19v-3" stroke="#2f93c9" strokeWidth="2.400" />
                  </svg>
                </button>
                <button aria-label="Details">
                  <svg width="28" height="28" viewBox="0 0 28 28" fill="none" stroke="#4a98d2" strokeWidth="1.800">
                    <circle cx="14" cy="14" r="13" />
                    <path d="M14 12v7.500M14 8v2.200" stroke="#2b9fe6" strokeWidth="2.400" />
                  </svg>
                </button>
              </div>
            </td>
          </tr>
        ))}
      </tbody>
    </table>
  );
}

export default function App() {
  return (
    <div className="h-screen bg-black font-[Roboto,sans-serif]">
      <div className="relative flex h-full flex-col overflow-hidden rounded-[14px] bg-[#f8f8fd]">
        <BrowserChrome />
        <Header />
        <Toolbar />
        <main className="min-h-0 flex-1 overflow-hidden pt-5 pr-4 pl-[18px]">
          <section className="mx-auto max-w-[1306px] overflow-hidden rounded-t-[24px] bg-white">
            <div className="flex h-[69px] items-center pl-6 text-[15px] text-[#3f3e48]">
              <h2 className="text-[16px] font-medium">Projects</h2>
              <button aria-label="Help" className="ml-[10px] flex size-5 items-center justify-center rounded-full border-2 border-[#f3c75c] text-[12px] text-[#f0b93c]">
                ?
              </button>
              <p className="ml-8 w-[410px]">85 in Total, 31 Without Location</p>
              <button className="h-[38px] w-[116px] rounded-full bg-[#2a98e9] text-[15px] text-[#e4f3fe]">Map + List</button>
              <button className="ml-[34px]">List</button>
            </div>
            <ProjectMap />
            <ProjectTable />
          </section>
        </main>
        <div className="absolute bottom-2 left-1/2 h-[6px] w-[396px] -translate-x-1/2 rounded-full bg-black" />
      </div>
    </div>
  );
}
